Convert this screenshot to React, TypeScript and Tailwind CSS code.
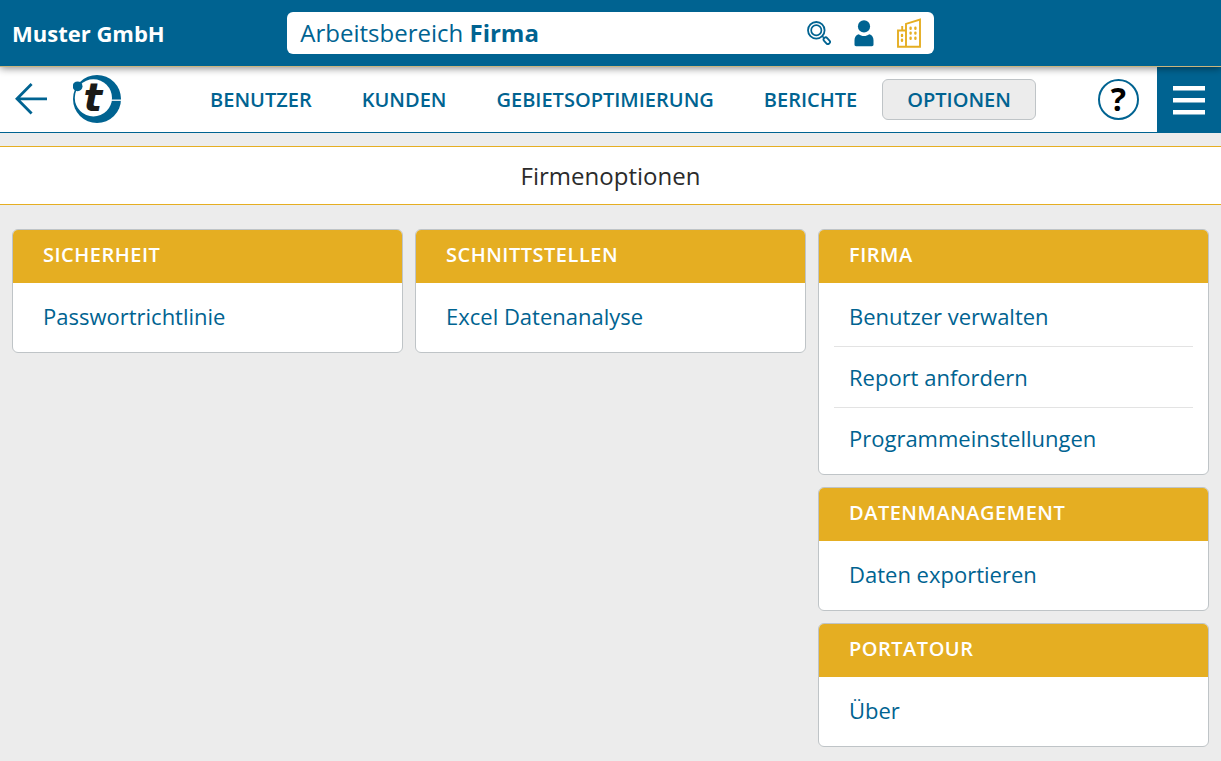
import type { ReactNode } from "react";

function BackIcon() {
  return (
    <svg className="size-8" viewBox="0 0 32 32" fill="none" stroke="currentColor" strokeWidth="2.8" aria-hidden="true">
      <path d="M32 15.800H2M16.600 1 2 15.800l14.600 14.800" />
    </svg>
  );
}

function Logo() {
  return (
    <svg className="size-12" viewBox="0 0 48 48" role="img" aria-label="portatour">
      <circle cx="24" cy="24" r="24" fill="#006391" />
      <circle cx="20.4" cy="22.9" r="18.6" fill="#fff" />
      <path d="M36 25.2H48" stroke="#fff" strokeWidth="1.3" />
      <circle cx="4.6" cy="11.3" r="4.9" fill="#006391" />
      <text
        x="10.5"
        y="36.3"
        fontSize="39"
        fontWeight="700"
        fontStyle="italic"
        fill="#1a1a18"
        fontFamily="'DejaVu Sans', sans-serif"
      >
        t
      </text>
    </svg>
  );
}

function SearchIcon() {
  return (
    <svg className="size-6" viewBox="0 0 24 24" fill="none" stroke="currentColor" aria-hidden="true">
      <circle cx="9.3" cy="9.3" r="8.3" strokeWidth="1.8" />
      <circle cx="9.3" cy="9.3" r="5.1" strokeWidth="1.7" />
      <path d="m14.8 14.8 2 2" strokeWidth="1.6" />
      <rect x="16.1" y="17.6" width="7.4" height="4.2" rx="2" strokeWidth="1.8" transform="rotate(48 19.8 19.7)" />
    </svg>
  );
}

function UserIcon() {
  return (
    <svg className="h-[27px] w-5" viewBox="0 0 20 27" fill="currentColor" aria-hidden="true">
      <circle cx="10" cy="6.4" r="6.1" />
      <path d="M.5 24.500v-4.200c0-3 1.300-5.300 4.300-6.100C6.300 15.400 8 16 10 16s3.700-.6 5.200-1.800c3 .8 4.300 3.100 4.300 6.100v4.200c0 1-.6 1.700-1.600 1.700H2.100c-1 0-1.600-.7-1.600-1.700Z" />
    </svg>
  );
}

function CompanyIcon() {
  return (
    <svg className="h-[30px] w-6" viewBox="0 0 24 30" fill="none" stroke="currentColor" strokeWidth="1.9" aria-hidden="true">
      <path d="M9 28.800V5.900L23 1.500v27.300H1V12.500H9M5.200 12.500V8" />
      <path d="M13.600 9.700v1M18.400 9.700v1M13.600 14.600v1M18.400 14.600v1M13.600 19.700v1M18.400 19.700v1M5 16.900v1M5 21.800v1" strokeWidth="2.4" strokeLinecap="round" />
    </svg>
  );
}

function MenuIcon() {
  return (
    <svg className="size-8" viewBox="0 0 32 32" fill="currentColor" aria-hidden="true">
      <path d="M0 2h32v4.600H0zM0 14h32v4.600H0zM0 26h32v4.600H0z" />
    </svg>
  );
}

const navItems = ["Benutzer", "Kunden", "Gebietsoptimierung", "Berichte", "Optionen"];

function Card({ title, items }: { title: string; items: string[] }) {
  return (
    <section className="overflow-hidden rounded-md border border-[#bfc4c7] bg-white">
      <h2 className="bg-[#e5ae22] px-[30px] pt-[11px] pb-[14px] text-[20px] leading-7 font-semibold tracking-wide text-white uppercase">
        {title}
      </h2>
      <ul className="divide-y divide-[#e3e3e3] px-[15px] pt-[3px] pb-1.5">
        {items.map((item) => (
          <li key={item}>
            <a href="#" className="block px-[15px] py-[15px] text-[22px] leading-[30px] text-[#006391]">
              {item}
            </a>
          </li>
        ))}
      </ul>
    </section>
  );
}

function Column({ children }: { children?: ReactNode }) {
  return <div className="flex flex-col gap-3">{children}</div>;
}

export default function App() {
  return (
    <div className="min-h-screen bg-[#ececec] font-['Open_Sans',sans-serif] text-[#006391]">
      <header className="relative z-10 grid grid-cols-[1fr_54%_1fr] items-center border-b border-[#c9b57e] bg-[#006391] px-3 py-3 shadow-[0_1px_8px_rgba(0,0,0,0.5)]">
        <strong className="text-[22px] leading-8 font-bold text-white">Muster GmbH</strong>
        <div className="flex h-[42px] items-center justify-between rounded-md bg-white px-[13px]">
          <span className="text-[24px] leading-8">
            Arbeitsbereich <b>Firma</b>
          </span>
          <div className="flex items-center gap-[23px]">
            <button type="button" aria-label="Suchen">
              <SearchIcon />
            </button>
            <button type="button" aria-label="Benutzer">
              <UserIcon />
            </button>
            <button type="button" aria-label="Firma" className="text-[#e5ae22]">
              <CompanyIcon />
            </button>
          </div>
        </div>
      </header>

      <div className="grid h-[66px] grid-cols-[1fr_auto_1fr] items-center border-b border-[#006391] bg-white">
        <div className="flex items-center gap-[26px] pb-px pl-[15px]">
          <button type="button" aria-label="Zurück">
            <BackIcon />
          </button>
          <a href="#">
            <Logo />
          </a>
        </div>
        <nav className="flex items-center">
          {navItems.map((item) => (
            <a
              key={item}
              href="#"
              aria-current={item === "Optionen" ? "page" : undefined}
              className="rounded-md border border-transparent px-6 py-1.5 text-[20px] leading-[27px] font-semibold uppercase aria-[current=page]:border-[#bfc4c7] aria-[current=page]:bg-[#ececec]"
            >
              {item}
            </a>
          ))}
        </nav>
        <div className="flex items-center justify-end gap-[18px] self-stretch">
          <button
            type="button"
            aria-label="Hilfe"
            className="flex size-[41px] items-center justify-center rounded-full border-2 border-[#006391] pb-0.5 text-[32px] leading-9 font-bold text-black"
          >
            ?
          </button>
          <button type="button" aria-label="Menü" className="flex w-16 items-center justify-center self-stretch bg-[#006391] text-white">
            <MenuIcon />
          </button>
        </div>
      </div>

      <h1 className="mt-[13px] border-y border-[#e5ae22] bg-white py-3 text-center text-[24px] leading-[33px] text-[#2b2b2b]">
        Firmenoptionen
      </h1>

      <main className="grid grid-cols-3 gap-3 px-3 pt-6 pb-3">
        <Column>
          <Card title="Sicherheit" items={["Passwortrichtlinie"]} />
        </Column>
        <Column>
          <Card title="Schnittstellen" items={["Excel Datenanalyse"]} />
        </Column>
        <Column>
          <Card title="Firma" items={["Benutzer verwalten", "Report anfordern", "Programmeinstellungen"]} />
          <Card title="Datenmanagement" items={["Daten exportieren"]} />
          <Card title="portatour" items={["Über"]} />
        </Column>
      </main>
    </div>
  );
}
